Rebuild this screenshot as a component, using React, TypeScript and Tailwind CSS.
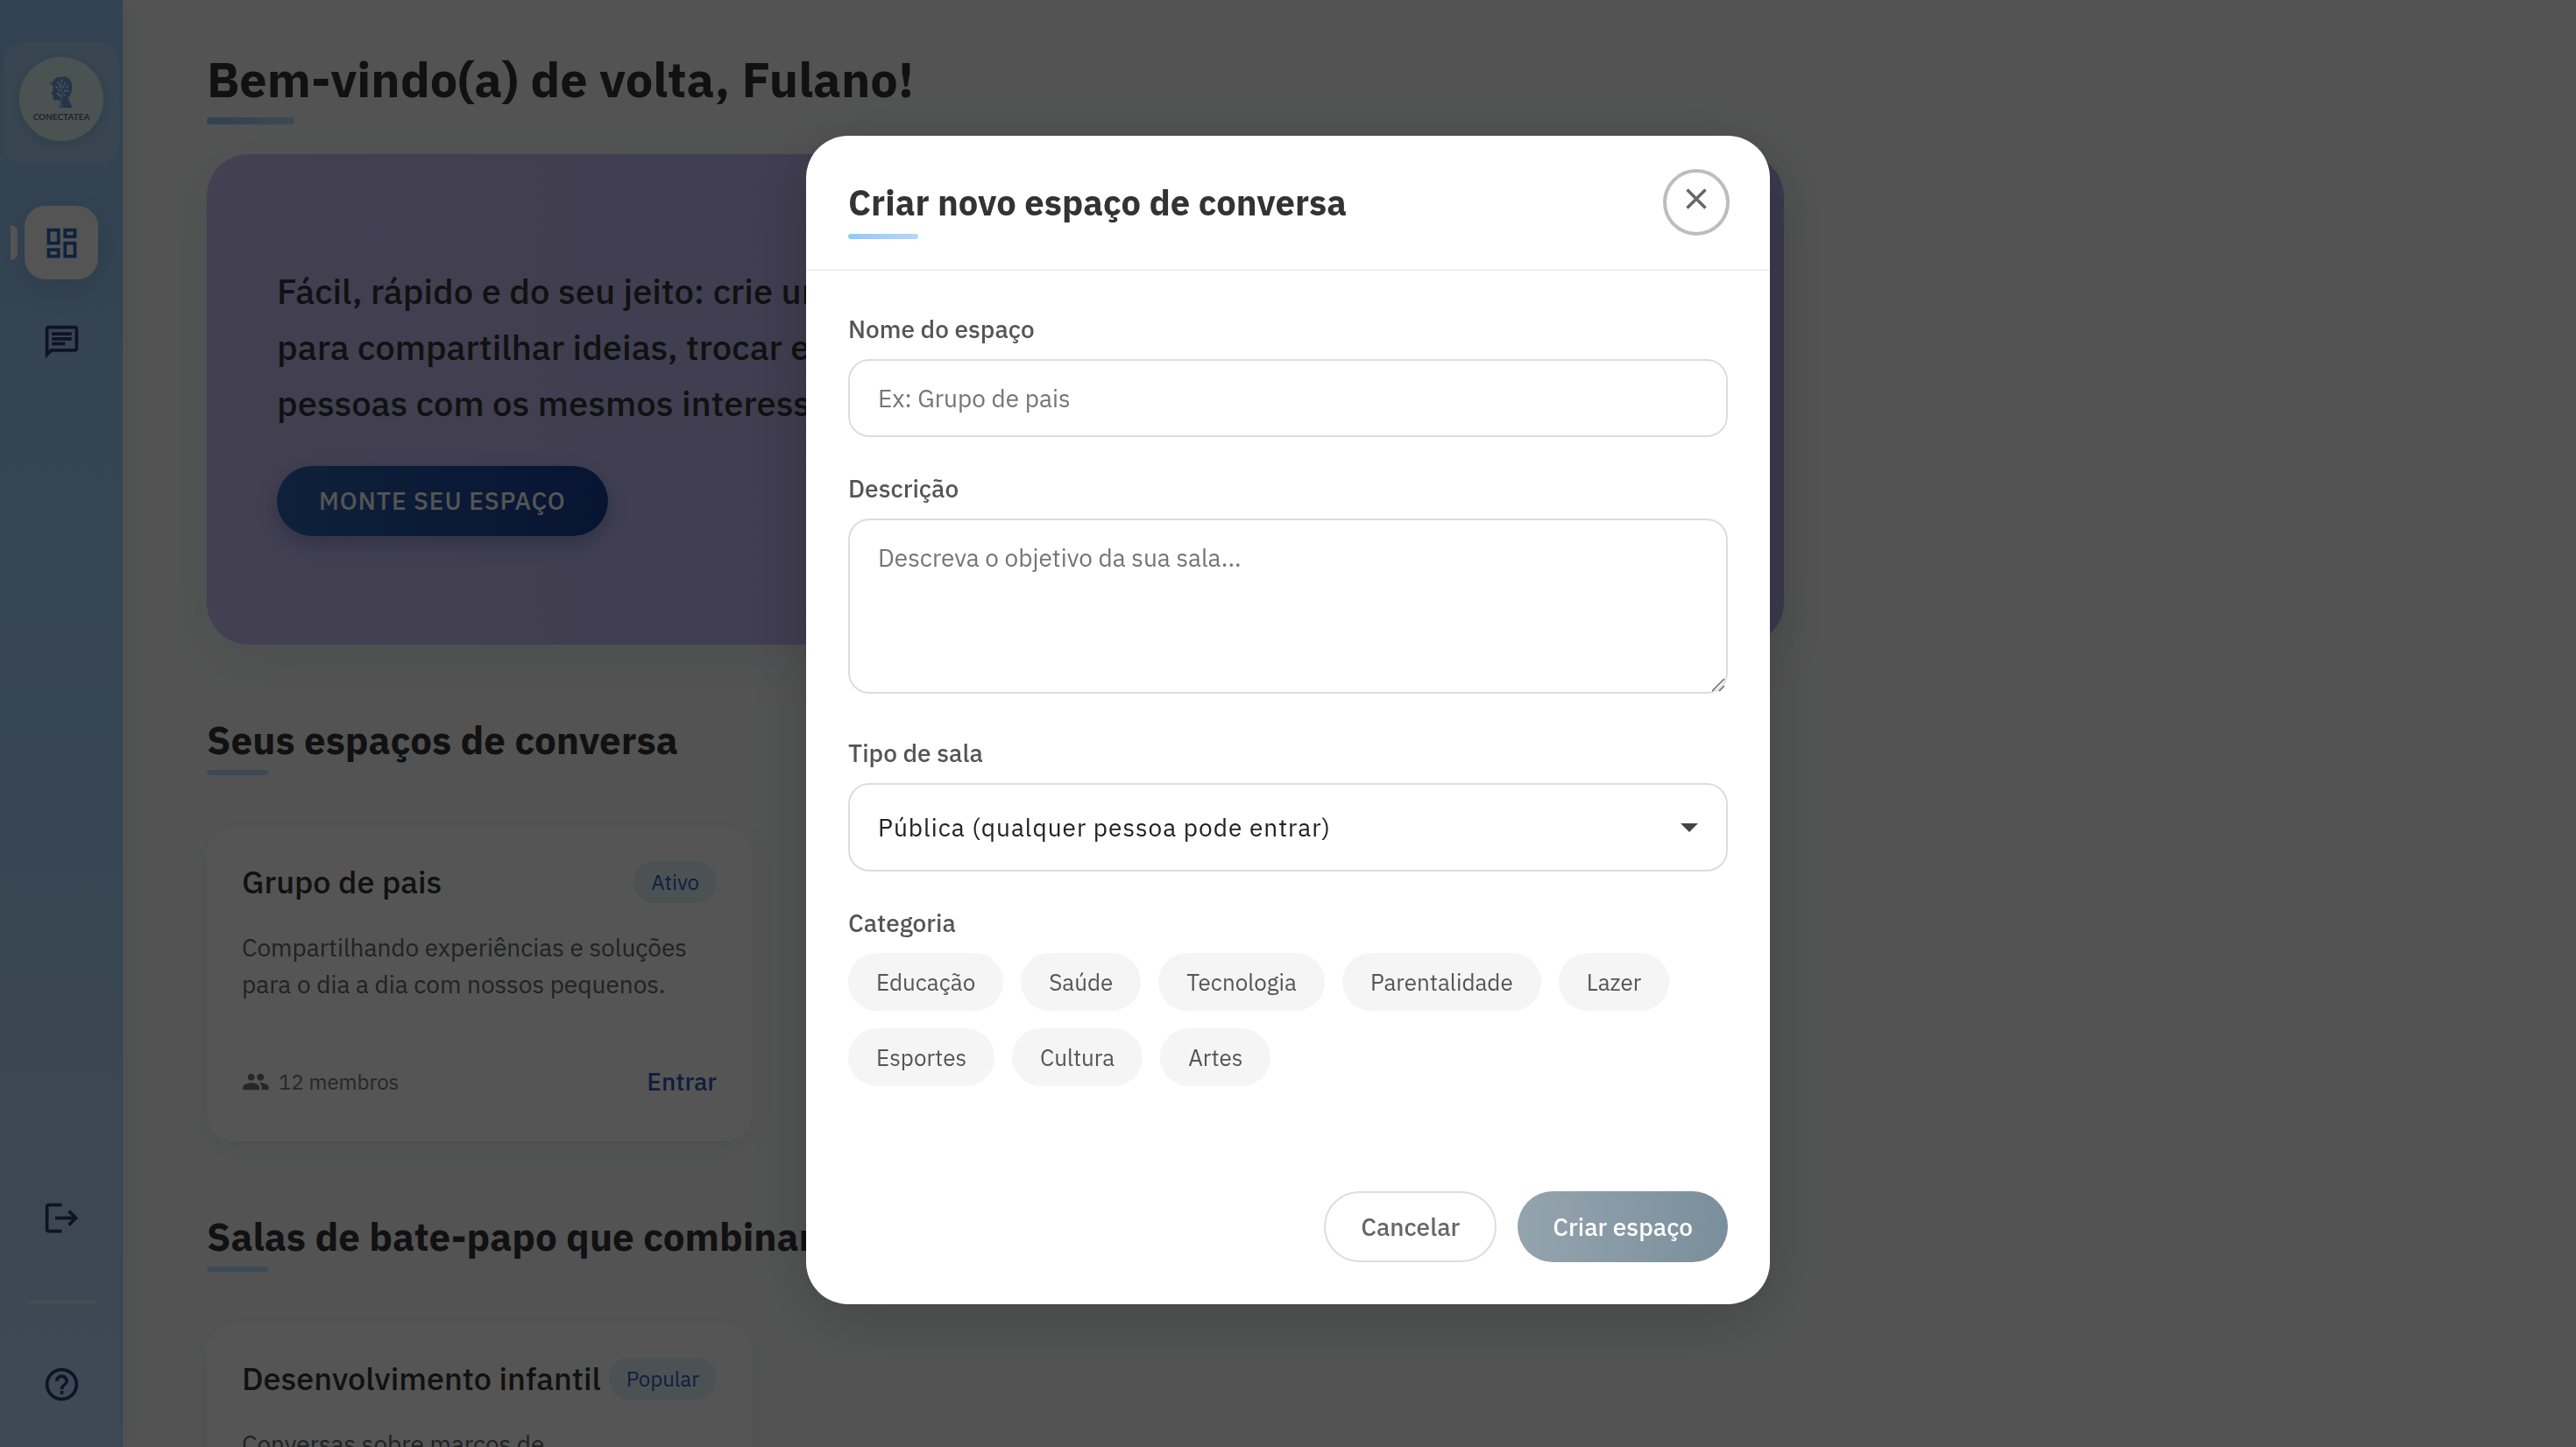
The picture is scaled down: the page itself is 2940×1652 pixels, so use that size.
import { useState } from "react";
import type { ReactNode } from "react";
import { MdHelpOutline, MdOutlineChat, MdOutlineDashboard, MdPeople } from "react-icons/md";

const categories = [
  "Educação",
  "Saúde",
  "Tecnologia",
  "Parentalidade",
  "Lazer",
  "Esportes",
  "Cultura",
  "Artes",
];

const leaves: [number, number, number][] = [
  [211, 279, 0],
  [200, 287, -35],
  [223, 287, 35],
  [194, 301, -50],
  [231, 299, 50],
  [206, 297, -20],
  [218, 298, 25],
  [202, 312, -50],
  [224, 312, 45],
  [232, 313, 60],
  [198, 324, -60],
  [205, 330, -35],
  [221, 327, 50],
];

function Logo() {
  return (
    <div className="flex size-24 flex-col items-center rounded-full bg-[#e2f8f6] pt-[21px] shadow-[0_4px_16px_rgba(30,70,120,0.25)] ring-1 ring-[#a3cdea]">
      <svg viewBox="168 260 84 114" className="h-[38px] w-7" aria-hidden="true">
        <path
          fill="#6b9fe0"
          d="M203 371H247C245 359 235 350 234 336C247 322 250 300 244 283C241 276 236 270 229 268L221 264L215 267C200 262 183 271 180 286L171 281C173 289 177 294 181 296C183 303 182 309 180 313L174 322C174 325 180 324 181 327C179 330 182 332 181 335C180 345 187 347 195 344C205 343 208 350 207 359C206 365 203 367 203 371Z"
        />
        <path
          d="M213 371C209 350 213 330 211 284M211 335L198 318M212 328L226 308M210 312L200 300M212 306L221 292"
          fill="none"
          stroke="#e2f8f6"
          strokeWidth="2"
        />
        {leaves.map(([x, y, a]) => (
          <ellipse
            key={`${x}-${y}`}
            cx={x}
            cy={y}
            rx="2.6"
            ry="5.5"
            fill="#e2f8f6"
            transform={`rotate(${a} ${x} ${y})`}
          />
        ))}
        <path d="M234 270l6-5M240 277l3-3M228 266l1-3" stroke="#6b9fe0" strokeWidth="2" />
      </svg>
      <span className="mt-[3px] font-['Lato'] text-[10px] leading-3 font-bold text-[#55707a]">
        CONECTATEA
      </span>
    </div>
  );
}

function LogoutIcon() {
  return (
    <svg viewBox="0 0 24 24" fill="currentColor" className="size-[45px]" aria-hidden="true">
      <path d="m17 7-1.41 1.41L18.17 11H8v2h10.17l-2.58 2.58L17 17l5-5zM4 5h8V3H4c-1.1 0-2 .9-2 2v14c0 1.1.9 2 2 2h8v-2H4z" />
    </svg>
  );
}

function NavButton({ label, active, children }: { label: string; active?: boolean; children: ReactNode }) {
  return (
    <button
      type="button"
      aria-label={label}
      className={
        active
          ? "relative flex size-[84px] items-center justify-center rounded-3xl bg-[#fcfcfc] text-[#2f66bf] shadow-[0_8px_32px_rgba(30,80,140,0.2)]"
          : "relative flex size-[84px] items-center justify-center rounded-3xl text-[#303870]"
      }
    >
      {active && <span className="absolute top-[22px] -left-4 h-10 w-2 rounded-r-lg bg-[#fcfcfc]" />}
      {children}
    </button>
  );
}

function Sidebar() {
  return (
    <aside className="z-10 flex w-[140px] shrink-0 flex-col items-center bg-linear-to-b from-[#94c6f5] to-[#b8dcfb] pt-12 pb-[30px] shadow-[4px_0_24px_rgba(0,0,0,0.08),inset_-2px_0_0_rgba(144,202,249,0.6)]">
      <div className="flex h-[139px] w-[132px] justify-center rounded-3xl bg-white/20 pt-[17px]">
        <Logo />
      </div>
      <nav className="mt-12 flex flex-1 flex-col items-center gap-[29px]">
        <NavButton label="Painel" active>
          <MdOutlineDashboard className="size-[45px]" />
        </NavButton>
        <NavButton label="Conversas">
          <MdOutlineChat className="size-[45px]" />
        </NavButton>
      </nav>
      <NavButton label="Sair">
        <LogoutIcon />
      </NavButton>
      <div className="mt-[52px] mb-[50px] h-1 w-20 shrink-0 bg-[#cde4f4]" />
      <NavButton label="Ajuda">
        <MdHelpOutline className="size-[45px]" />
      </NavButton>
    </aside>
  );
}

function RoomCard({ title, badge, text, members }: { title: string; badge: string; text: string; members: string }) {
  return (
    <article className="flex h-[360px] flex-col rounded-4xl bg-white p-10 shadow-[0_8px_32px_rgba(0,0,0,0.06)]">
      <div className="flex items-center justify-between">
        <h3 className="text-[36px] leading-[48px] font-medium whitespace-nowrap">{title}</h3>
        <span className="rounded-full bg-[#e3f2fd] px-5 text-2xl leading-[48px] text-[#2a62bd]">{badge}</span>
      </div>
      <p className="mt-[30px] text-[28px] leading-[42px] text-[#666]">{text}</p>
      <div className="mt-auto flex h-14 items-center justify-between">
        <span className="flex items-center gap-2.5 text-2xl text-[#757575]">
          <MdPeople className="size-8" />
          {members}
        </span>
        <button type="button" className="text-[28px] font-medium text-[#285cb8]">
          Entrar
        </button>
      </div>
    </article>
  );
}

function Section({ title, children }: { title: string; children: ReactNode }) {
  return (
    <section className="mt-[81px]">
      <h2 className="text-[44px] leading-[56px] font-bold">{title}</h2>
      <div className="mt-1.5 h-1.5 w-[70px] rounded-sm bg-[#b5dbfb]" />
      <div className="mt-[58px] grid grid-cols-4 gap-10">{children}</div>
    </section>
  );
}

const labelClass = "mb-4 block text-[28px] leading-[37px] font-medium text-[#555]";
const fieldClass =
  "block w-full rounded-3xl border-2 border-[#ddd] bg-white px-8 text-[28px] leading-[37px] placeholder:text-[#757575] outline-none";

function CreateRoomDialog() {
  const [selected, setSelected] = useState<string | null>(null);
  return (
    <div
      role="dialog"
      aria-modal="true"
      aria-labelledby="dialog-title"
      className="w-full max-w-[1100px] rounded-[48px] bg-white shadow-[0_16px_80px_rgba(0,0,0,0.2)]"
    >
      <header className="flex items-center justify-between border-b-2 border-[#f0f0f0] py-[38px] pr-[46px] pl-12">
        <h2 id="dialog-title" className="relative text-[40px] leading-[52px] font-bold">
          Criar novo espaço de conversa
          <span className="absolute -bottom-4 left-0 h-1.5 w-20 rounded-sm bg-linear-to-r from-[#90caf9] to-[#b3d7fc]" />
        </h2>
        <button
          type="button"
          aria-label="Fechar"
          className="flex size-[76px] items-center justify-center rounded-full border-4 border-[#bdbdbd] pb-2 text-[#666]"
        >
          <svg viewBox="0 0 24 24" className="size-6" stroke="currentColor" strokeWidth="3.4" aria-hidden="true">
            <path d="M1.5 1.5l21 21M22.5 1.5l-21 21" />
          </svg>
        </button>
      </header>
      <form className="px-12 pt-12 pb-12" onSubmit={(e) => e.preventDefault()}>
        <div className="flex flex-col gap-10">
          <div>
            <label htmlFor="room-name" className={labelClass}>
              Nome do espaço
            </label>
            <input id="room-name" type="text" placeholder="Ex: Grupo de pais" className={`${fieldClass} h-[89px]`} />
          </div>
          <div className="pb-[9px]">
            <label htmlFor="room-description" className={labelClass}>
              Descrição
            </label>
            <div className="relative">
              <textarea
                id="room-description"
                placeholder="Descreva o objetivo da sua sala..."
                className={`${fieldClass} h-[200px] resize-none py-6`}
              />
              <svg
                viewBox="0 0 16 16"
                className="pointer-events-none absolute right-0.5 bottom-0.5 size-4"
                stroke="#666"
                strokeWidth="1.5"
                aria-hidden="true"
              >
                <path d="M0 15L14 1M8 15l6-6" />
              </svg>
            </div>
          </div>
          <div>
            <label htmlFor="room-type" className={labelClass}>
              Tipo de sala
            </label>
            <div className="relative">
              <select id="room-type" className={`${fieldClass} h-[101px] appearance-none tracking-[1px] text-[#212121]`}>
                <option>Pública (qualquer pessoa pode entrar)</option>
                <option>Privada (somente convidados)</option>
              </select>
              <svg
                viewBox="0 0 20 10"
                className="pointer-events-none absolute top-[46px] right-[34px] h-2.5 w-5"
                fill="#444"
                aria-hidden="true"
              >
                <path d="M0 0h20L10 10z" />
              </svg>
            </div>
          </div>
          <fieldset>
            <legend className={labelClass}>Categoria</legend>
            <div className="flex flex-wrap gap-5">
              {categories.map((name) => (
                <button
                  key={name}
                  type="button"
                  aria-pressed={selected === name}
                  onClick={() => setSelected(name)}
                  className="h-[66px] rounded-full bg-[#f5f5f5] px-8 text-[26px] text-[#555]"
                >
                  {name}
                </button>
              ))}
            </div>
          </fieldset>
        </div>
        <div className="mt-[120px] flex justify-end gap-6">
          <button
            type="button"
            className="h-[81px] rounded-full border-2 border-[#ddd] px-10 text-[28px] font-medium text-[#666]"
          >
            Cancelar
          </button>
          <button
            type="submit"
            className="h-[81px] rounded-full bg-linear-to-r from-[#94a4ae] to-[#7a8f9b] px-10 text-[28px] font-medium text-white"
          >
            Criar espaço
          </button>
        </div>
      </form>
    </div>
  );
}

export default function App() {
  return (
    <div className="font-['IBM_Plex_Sans','Roboto',sans-serif] text-[#333]">
      <div className="flex h-screen overflow-hidden bg-[#f9fafb]">
        <Sidebar />
        <main className="min-w-0 flex-1 overflow-hidden px-24 pt-[58px]">
          <h1 className="text-[56px] leading-[64px] font-bold">Bem-vindo(a) de volta, Fulano!</h1>
          <div className="mt-3 h-2 w-[100px] rounded-full bg-linear-to-r from-[#90c4f5] to-[#b5dbfb]" />
          <div className="mt-[34px] flex h-[560px] max-w-[1800px] flex-col items-start justify-center rounded-[48px] bg-linear-to-r from-[#c6bff2] to-[#b3adec] px-20 shadow-[0_16px_64px_rgba(30,40,80,0.08)]">
            <p className="max-w-[860px] text-[40px] leading-[64px] font-medium">
              Fácil, rápido e do seu jeito: crie um espaço
              <br />
              para compartilhar ideias, trocar experiências
              <br />
              pessoas com os mesmos interesses que você.
            </p>
            <button
              type="button"
              className="mt-10 h-20 rounded-full bg-linear-to-r from-[#2c62b0] to-[#173f95] px-12 text-[28px] font-medium tracking-[1px] text-white shadow-[0_8px_24px_rgba(30,60,130,0.3)]"
            >
              MONTE SEU ESPAÇO
            </button>
          </div>
          <Section title="Seus espaços de conversa">
            <RoomCard
              title="Grupo de pais"
              badge="Ativo"
              text="Compartilhando experiências e soluções para o dia a dia com nossos pequenos."
              members="12 membros"
            />
          </Section>
          <Section title="Salas de bate-papo que combinam com você">
            <RoomCard
              title="Desenvolvimento infantil"
              badge="Popular"
              text="Conversas sobre marcos de desenvolvimento e estímulos."
              members="48 membros"
            />
          </Section>
        </main>
      </div>
      <div className="fixed inset-0 z-20 flex items-center justify-center bg-black/[0.665] pb-2">
        <CreateRoomDialog />
      </div>
    </div>
  );
}
